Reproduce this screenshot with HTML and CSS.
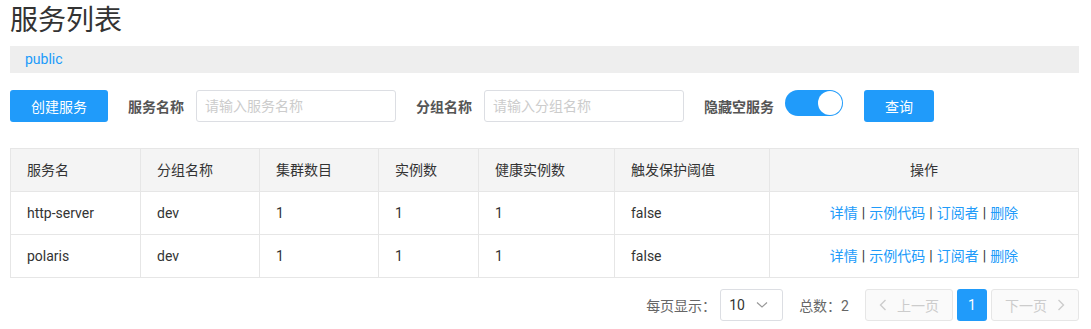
FILE: index.html
```html
<!DOCTYPE html>
<html lang="zh-CN">
<head>
    <meta charset="UTF-8">
    <title>服务列表</title>
    <link rel="stylesheet" href="styles.css">
</head>
<body>
    <div class="main-container">
        <h1 class="page-title">服务列表</h1>
        <div class="namespace-bar">
            <span class="namespace-item">public</span>
        </div>

        <div class="search-form">
            <button class="btn btn-primary btn-create">创建服务</button>
            <div class="form-item">
                <label class="form-label">服务名称</label>
                <input class="form-input" type="text" placeholder="请输入服务名称">
            </div>
            <div class="form-item">
                <label class="form-label">分组名称</label>
                <input class="form-input" type="text" placeholder="请输入分组名称">
            </div>
            <div class="form-item">
                <label class="form-label">隐藏空服务</label>
                <span class="switch switch-on"><span class="switch-knob"></span></span>
            </div>
            <button class="btn btn-primary btn-query">查询</button>
        </div>

        <table class="data-table">
            <colgroup>
                <col class="col-name">
                <col class="col-group">
                <col class="col-cluster">
                <col class="col-count">
                <col class="col-healthy">
                <col class="col-threshold">
                <col class="col-actions">
            </colgroup>
            <thead>
                <tr>
                    <th>服务名</th>
                    <th>分组名称</th>
                    <th>集群数目</th>
                    <th>实例数</th>
                    <th>健康实例数</th>
                    <th>触发保护阈值</th>
                    <th class="col-center">操作</th>
                </tr>
            </thead>
            <tbody>
                <tr>
                    <td>http-server</td>
                    <td>dev</td>
                    <td>1</td>
                    <td>1</td>
                    <td>1</td>
                    <td>false</td>
                    <td class="col-center">
                        <a class="link">详情</a><span class="sep">|</span><a class="link">示例代码</a><span class="sep">|</span><a class="link">订阅者</a><span class="sep">|</span><a class="link">删除</a>
                    </td>
                </tr>
                <tr>
                    <td>polaris</td>
                    <td>dev</td>
                    <td>1</td>
                    <td>1</td>
                    <td>1</td>
                    <td>false</td>
                    <td class="col-center">
                        <a class="link">详情</a><span class="sep">|</span><a class="link">示例代码</a><span class="sep">|</span><a class="link">订阅者</a><span class="sep">|</span><a class="link">删除</a>
                    </td>
                </tr>
            </tbody>
        </table>

        <div class="pagination">
            <span class="page-size-label">每页显示：</span>
            <span class="page-size-select">
                <span>10</span>
                <svg width="12" height="8" viewBox="0 0 12 8"><polyline points="1,1.5 6,6 11,1.5" fill="none" stroke="#999" stroke-width="1.2"/></svg>
            </span>
            <span class="page-total">总数：2</span>
            <div class="page-list">
                <button class="page-btn page-nav" disabled>
                    <svg width="8" height="12" viewBox="0 0 8 12"><polyline points="6.5,1 1.5,6 6.5,11" fill="none" stroke="#ccc" stroke-width="1.4"/></svg>
                    <span>上一页</span>
                </button>
                <button class="page-btn page-current">1</button>
                <button class="page-btn page-nav" disabled>
                    <span>下一页</span>
                    <svg width="8" height="12" viewBox="0 0 8 12"><polyline points="1.5,1 6.5,6 1.5,11" fill="none" stroke="#ccc" stroke-width="1.4"/></svg>
                </button>
            </div>
        </div>
    </div>
</body>
</html>
```

FILE: styles.css
```css
:root {
    --primary-color: #209bfa;
    --border-color: #e6e6e6;
    --text-color: #333;
}

body {
    margin: 0;
    font-family: Roboto, "Noto Sans CJK SC", sans-serif;
    font-size: 14px;
    color: var(--text-color);
    background-color: white;
}

.main-container {
    width: 1069px;
    padding-left: 10px;
}

.page-title {
    font-size: 28px;
    font-weight: normal;
    line-height: 36px;
    margin: 3px 0 7px;
    color: #333;
}

.namespace-bar {
    background-color: #eee;
    height: 27px;
    line-height: 27px;
    padding-left: 15px;
}

.namespace-item {
    color: var(--primary-color);
    font-size: 14px;
}

/* Search form */
.search-form {
    display: flex;
    align-items: flex-start;
    margin-top: 17px;
    height: 32px;
}

.btn {
    height: 32px;
    border: none;
    border-radius: 3px;
    font-family: inherit;
    font-size: 14px;
    padding: 0;
    cursor: pointer;
}

.btn-primary {
    background-color: var(--primary-color);
    color: white;
}

.btn-create {
    width: 98px;
    margin-right: 20px;
}

.btn-query {
    width: 70px;
    margin-left: 1px;
}

.form-item {
    display: flex;
    align-items: center;
    height: 32px;
    margin-right: 20px;
}

.form-label {
    font-weight: bold;
    color: #555;
    padding-right: 12px;
}

.form-input {
    width: 200px;
    height: 32px;
    box-sizing: border-box;
    border: 1px solid #dcdee3;
    border-radius: 3px;
    padding: 0 8px;
    font-family: inherit;
    font-size: 14px;
    color: var(--text-color);
}

.form-input::placeholder {
    color: #ccc;
}

.switch {
    display: inline-block;
    position: relative;
    width: 58px;
    height: 26px;
    border-radius: 13px;
    background-color: var(--primary-color);
    align-self: flex-start;
    margin-left: -1px;
}

.switch-knob {
    position: absolute;
    top: 1px;
    right: 1px;
    width: 24px;
    height: 24px;
    border-radius: 50%;
    background-color: white;
}

/* Table */
.data-table {
    width: 1069px;
    margin-top: 26px;
    border-collapse: collapse;
    table-layout: fixed;
    border: 1px solid var(--border-color);
}

.col-name { width: 130px; }
.col-group { width: 119px; }
.col-cluster { width: 119px; }
.col-count { width: 100px; }
.col-healthy { width: 136px; }
.col-threshold { width: 155px; }

.data-table th,
.data-table td {
    border: 1px solid var(--border-color);
    padding: 0 16px;
    line-height: 42px;
    text-align: left;
    font-weight: normal;
    white-space: nowrap;
}

.data-table th {
    background-color: #f4f4f4;
}

.data-table .col-center {
    text-align: center;
}

.link {
    color: var(--primary-color);
    cursor: pointer;
}

.sep {
    margin: 0 4px;
}

/* Pagination */
.pagination {
    display: flex;
    justify-content: flex-end;
    align-items: center;
    margin-top: 11px;
    height: 32px;
}

.page-size-label {
    color: #666;
    margin-right: 4px;
}

.page-size-select {
    display: flex;
    align-items: center;
    justify-content: space-between;
    box-sizing: border-box;
    width: 63px;
    height: 32px;
    padding: 0 14px 0 8px;
    border: 1px solid #dcdee3;
    border-radius: 3px;
    color: #333;
}

.page-total {
    color: #666;
    margin-left: 16px;
    margin-right: 16px;
}

.page-list {
    display: flex;
    gap: 4px;
}

.page-btn {
    height: 32px;
    box-sizing: border-box;
    border-radius: 3px;
    font-family: inherit;
    font-size: 14px;
    padding: 0;
}

.page-nav {
    display: flex;
    align-items: center;
    justify-content: center;
    gap: 10px;
    width: 88px;
    background-color: #fafafa;
    border: 1px solid var(--border-color);
    color: #ccc;
}

.page-current {
    width: 30px;
    border: none;
    background-color: var(--primary-color);
    color: white;
}
```
